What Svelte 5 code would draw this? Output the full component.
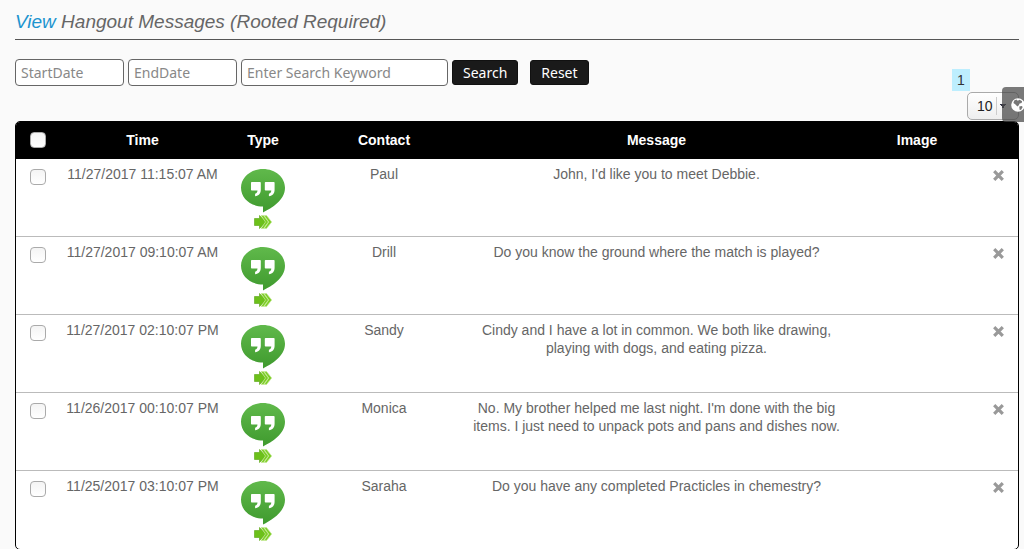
<script lang="ts">
  interface Message {
    time: string;
    contact: string;
    text: string;
  }

  const messages: Message[] = [
    { time: '11/27/2017 11:15:07 AM', contact: 'Paul', text: "John, I'd like you to meet Debbie." },
    { time: '11/27/2017 09:10:07 AM', contact: 'Drill', text: 'Do you know the ground where the match is played?' },
    { time: '11/27/2017 02:10:07 PM', contact: 'Sandy', text: 'Cindy and I have a lot in common. We both like drawing, playing with dogs, and eating pizza.' },
    { time: '11/26/2017 00:10:07 PM', contact: 'Monica', text: "No. My brother helped me last night. I'm done with the big items. I just need to unpack pots and pans and dishes now." },
    { time: '11/25/2017 03:10:07 PM', contact: 'Saraha', text: 'Do you have any completed Practicles in chemestry?' },
  ];

  let rows = $state(messages.map(m => ({ ...m, checked: false })));
  let startDate = $state('');
  let endDate = $state('');
  let keyword = $state('');
  let pageSize = $state('10');

  const allChecked = $derived(rows.length > 0 && rows.every(r => r.checked));

  function toggleAll() {
    const next = !allChecked;
    rows.forEach(r => (r.checked = next));
  }

  function reset() {
    startDate = '';
    endDate = '';
    keyword = '';
  }
</script>

<svg class="defs" width="0" height="0" aria-hidden="true">
  <linearGradient id="bubble" x1="0" y1="0" x2="0" y2="1">
    <stop offset="0" stop-color="#60b94b" />
    <stop offset="1" stop-color="#3f9a2e" />
  </linearGradient>
</svg>

<main>
  <h1><span>View</span> Hangout Messages (Rooted Required)</h1>

  <div class="toolbar">
    <form onsubmit={e => e.preventDefault()}>
      <input class="date" type="text" placeholder="StartDate" aria-label="Start date" bind:value={startDate} />
      <input class="date" type="text" placeholder="EndDate" aria-label="End date" bind:value={endDate} />
      <input class="keyword" type="text" placeholder="Enter Search Keyword" aria-label="Search keyword" bind:value={keyword} />
      <button type="submit">Search</button>
      <button type="button" class="reset" onclick={reset}>Reset</button>
    </form>
    <div class="pager">
      <a href="#page-1">1</a>
      <select aria-label="Rows per page" bind:value={pageSize}>
        <option>10</option>
        <option>25</option>
        <option>50</option>
      </select>
    </div>
  </div>

  <div class="frame">
    <table>
      <colgroup>
        <col class="c-check" />
        <col class="c-time" />
        <col class="c-type" />
        <col class="c-contact" />
        <col />
        <col class="c-image" />
        <col class="c-remove" />
      </colgroup>
      <thead>
        <tr>
          <th><input type="checkbox" aria-label="Select all" checked={allChecked} onchange={toggleAll} /></th>
          <th>Time</th>
          <th>Type</th>
          <th>Contact</th>
          <th>Message</th>
          <th>Image</th>
          <th></th>
        </tr>
      </thead>
      <tbody>
        {#each rows as row, i}
          <tr>
            <td class="check"><input type="checkbox" aria-label="Select message from {row.contact}" bind:checked={row.checked} /></td>
            <td>{row.time}</td>
            <td class="type">
              <svg width="44" height="44" viewBox="0 0 44 44" aria-hidden="true">
                <path fill="url(#bubble)" d="M22 0C9.500 0 0 8.300 0 18.800s9.500 18.700 22 18.700V43.500c9-4.500 22-12.500 22-24.700C44 8.300 34.500 0 22 0Z" />
                <path fill="#fff" d="M10.800 13h8.200q.8 0 .8.800v7c0 3.600-2 5.900-5.700 6.500v-2.600c1.600-.6 2.400-1.600 2.400-3.200h-5.700q-.8 0-.8-.8v-6.900q0-.8.8-.8ZM24.600 13h8.200q.8 0 .8.800v7c0 3.600-2 5.900-5.700 6.500v-2.600c1.600-.6 2.400-1.600 2.400-3.200h-5.700q-.8 0-.8-.8v-6.900q0-.8.8-.8Z" />
              </svg>
              <svg width="18" height="14" viewBox="0 0 18 14" aria-hidden="true">
                <path fill="#6cc01a" stroke="#58a312" stroke-width=".6" d="M.5 3.500h5V.5l6.500 6.500-6.500 6.500v-3h-5Z" />
                <path fill="#7ccd26" stroke="#c5ea96" stroke-width=".7" d="M7 .5h2.500l5 6.500-5 6.500H7L11.500 7Z" />
                <path fill="#7ccd26" stroke="#c5ea96" stroke-width=".7" d="M10.200 .5h2.300L17.700 7l-5.200 6.500h-2.300L14.700 7Z" />
              </svg>
            </td>
            <td>{row.contact}</td>
            <td class="message">{row.text}</td>
            <td></td>
            <td class="remove">
              <button type="button" aria-label="Delete message" onclick={() => rows.splice(i, 1)}>
                <svg width="11" height="11" viewBox="0 0 11 11"><path stroke="#999" stroke-width="3.200" d="m1.200 1.200 8.600 8.600m0-8.600-8.600 8.600" /></svg>
              </button>
            </td>
          </tr>
        {/each}
      </tbody>
    </table>
  </div>
</main>

<button type="button" class="side-tab" aria-label="Language">
  <svg width="14" height="14" viewBox="0 0 14 14">
    <circle cx="7" cy="7" r="6.800" fill="#fff" />
    <path fill="#777" d="m3.200 2.600 2.300-1 1.200 1.200 2-1 2.400 1.400-.5 1.700-2 .5-1 2.200-1.200 1-2.200-2.300-1.800-1.200ZM8.200 8.500l2.500-.6 1 1.200-1.600 2.700-1.400.3Z" />
  </svg>
</button>

<style>
  :global(body) {
    background: #fafafa;
    color: #666;
    font: 14px/18px "Liberation Sans", Arial, sans-serif;
  }
  .defs { position: absolute; }

  main { padding: 8px 5px 0 15px; }

  h1 {
    margin: 0 0 19px;
    padding-bottom: 3px;
    border-bottom: 1px solid #555;
    font-size: 19px;
    line-height: 28px;
    font-style: italic;
    font-weight: 400;
  }
  h1 span { color: #1c94cf; }

  /* Toolbar */
  .toolbar {
    display: flex;
    justify-content: space-between;
    align-items: flex-start;
    margin-bottom: 1px;
  }
  form {
    display: flex;
    align-items: center;
    gap: 4px;
  }
  form input,
  form button {
    box-sizing: border-box;
    font: 14px "Noto Sans", sans-serif;
    border-radius: 4px;
  }
  form input {
    height: 27px;
    padding: 0 5px;
    border: 1px solid #666;
    background: #fff;
    color: #333;
  }
  form input::placeholder { color: #888; opacity: 1; }
  .date { width: 109px; }
  .keyword { width: 207px; }
  form button {
    height: 25px;
    padding: 0 10px;
    border: 1px solid #111;
    border-radius: 3px;
    background: #1a1a1a;
    color: #fff;
    cursor: pointer;
  }
  .reset { margin-left: 8px; }

  .pager {
    display: flex;
    flex-direction: column;
    gap: 1px;
    padding-top: 10px;
  }
  .pager a {
    align-self: flex-start;
    margin-left: -15px;
    padding: 2px 5px;
    background: #bdeefe;
    color: #333;
    text-decoration: none;
  }
  .pager select {
    box-sizing: border-box;
    width: 52px;
    height: 28px;
    padding: 0 9px;
    appearance: none;
    border: 1px solid #aaa;
    border-radius: 5px;
    background:
      conic-gradient(from -30deg at 50% 100%, #334 60deg, transparent 0) right 12px center / 6px 5px no-repeat,
      linear-gradient(#ccc, #ccc) right 21px center / 1px 18px no-repeat,
      linear-gradient(#fff, #eee);
    color: #222;
    font: inherit;
  }

  /* Message table */
  .frame {
    border: 1px solid #000;
    border-radius: 5px;
    overflow: hidden;
    background: #fff;
  }
  table {
    width: 100%;
    table-layout: fixed;
    border-collapse: separate;
    border-spacing: 0;
    text-align: center;
  }
  .c-check { width: 44px; }
  .c-time { width: 165px; }
  .c-type { width: 76px; }
  .c-contact { width: 166px; }
  .c-image { width: 142px; }
  .c-remove { width: 30px; }

  th {
    box-sizing: border-box;
    height: 37px;
    padding: 0 0 2px;
    background: #000;
    color: #fff;
  }
  td {
    box-sizing: border-box;
    height: 78px;
    padding: 6px 0 0;
    vertical-align: top;
    border-bottom: 1px solid #bbb;
  }
  tbody tr:last-child td { border-bottom: none; }
  .message { padding: 6px 6px 0; }
  .check { padding-top: 10px; }
  .type { padding-top: 10px; }
  .type svg {
    display: block;
    margin: 0 auto 2px;
  }

  input[type='checkbox'] {
    display: block;
    box-sizing: border-box;
    width: 16px;
    height: 16px;
    margin: 0 auto;
    appearance: none;
    border: 1px solid #aaa;
    border-radius: 4px;
    background: linear-gradient(#f4f4f4, #fff);
  }
  input[type='checkbox']:checked { background: #1c94cf; }

  .remove { padding: 11px 10px 0 0; }
  .remove button {
    display: block;
    margin: 0 auto;
    padding: 0;
    border: none;
    background: none;
    cursor: pointer;
  }
  .remove svg { display: block; }

  /* Tab docked to the window edge */
  .side-tab {
    position: fixed;
    top: 87px;
    right: 0;
    width: 22px;
    height: 35px;
    padding: 0 0 0 9px;
    border: none;
    border-radius: 4px 0 0 4px;
    background: rgba(70, 70, 70, 0.72);
    overflow: hidden;
  }
  .side-tab svg { display: block; }
</style>
